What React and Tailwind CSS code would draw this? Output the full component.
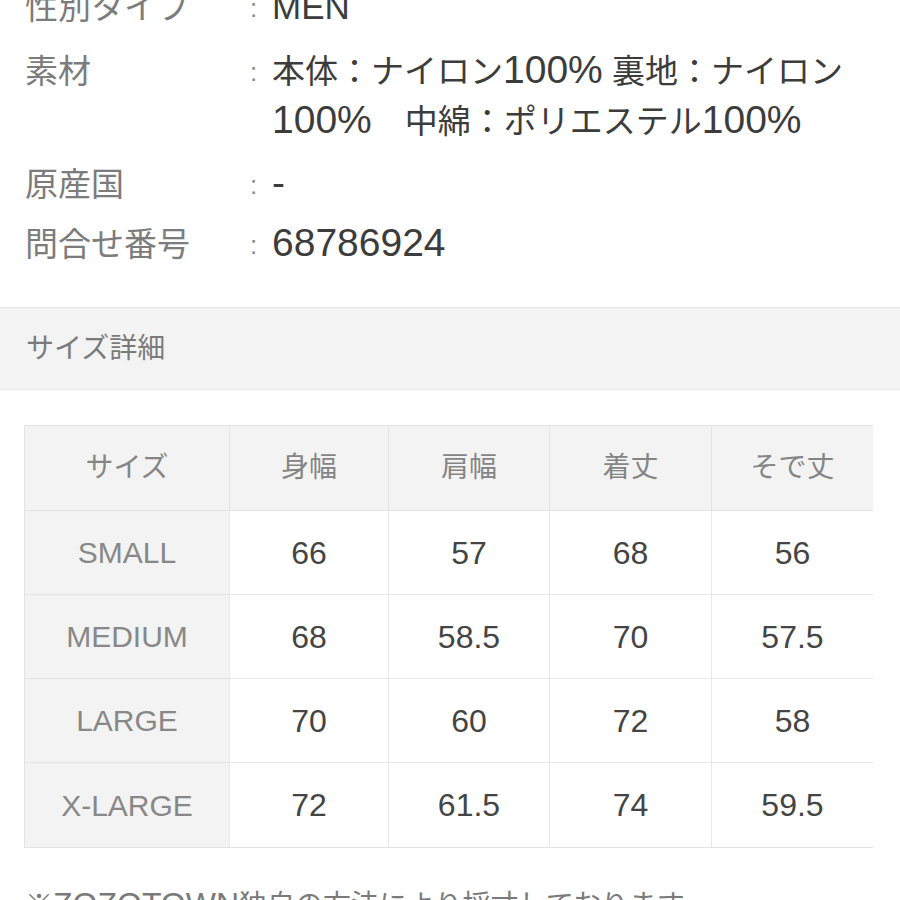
const sizes = [
  { name: "SMALL", v: ["66", "57", "68", "56"] },
  { name: "MEDIUM", v: ["68", "58.5", "70", "57.5"] },
  { name: "LARGE", v: ["70", "60", "72", "58"] },
  { name: "X-LARGE", v: ["72", "61.5", "74", "59.5"] },
];

const heads = ["身幅", "肩幅", "着丈", "そで丈"];

const L = ({ children, className = "" }) => (
  <span className={`text-[39px] leading-none ${className}`}>{children}</span>
);

const Row = ({ label, children, className = "" }) => (
  <div className={`flex leading-[50px] ${className}`}>
    <div className="w-[225px] shrink-0 text-[33px] text-[#7c7c7c]">{label}</div>
    <div className="w-[22px] shrink-0 text-[26px] text-[#8a8a8a]">:</div>
    <div className="flex-1 text-[33px] text-[#3c3c3c]">{children}</div>
  </div>
);

export default function App() {
  return (
    <div
      className="w-[900px] h-[900px] overflow-hidden bg-white"
      style={{ fontFamily: '"Liberation Sans", "Noto Sans CJK JP", sans-serif' }}
    >
      <div className="pl-[25px] pr-[20px] mt-[-17px]">
        <Row label="性別タイプ" className="h-[50px]">
          <span className="text-[35px] leading-none">MEN</span>
        </Row>
        <Row label="素材" className="mt-[14px] h-[100px]">
          本体：ナイロン<L>100%</L> 裏地：ナイロン
          <br />
          <L>100%</L>　中綿：ポリエステル<L>100%</L>
        </Row>
        <Row label="原産国" className="mt-[13px] h-[50px]">
          <L>-</L>
        </Row>
        <Row label="問合せ番号" className="mt-[10px] h-[50px]">
          <L>68786924</L>
        </Row>
      </div>

      <div className="mt-[37px] h-[83px] flex items-center px-[26px] bg-[#f3f3f3] border-y border-[#e8e8e8]">
        <span className="text-[28px] text-[#7a7a7a]">サイズ詳細</span>
      </div>

      <div className="mt-[35px] ml-[24px] w-[849px] grid grid-cols-[204px_159px_161px_162px_162px] border border-[#e3e3e3]">
        <div className="h-[85px] flex items-center justify-center bg-[#f3f3f3] text-[28px] text-[#858585] border-b border-[#e3e3e3]">
          サイズ
        </div>
        {heads.map((h) => (
          <div
            key={h}
            className="h-[85px] flex items-center justify-center bg-[#f3f3f3] text-[28px] text-[#858585] border-l border-b border-[#e3e3e3]"
          >
            {h}
          </div>
        ))}
        {sizes.map((s, i) => (
          <div key={s.name} className="contents">
            <div
              className={`h-[84px] flex items-center justify-center bg-[#f3f3f3] text-[30px] text-[#888] ${
                i < 3 ? "border-b border-[#e3e3e3]" : ""
              }`}
            >
              {s.name}
            </div>
            {s.v.map((v, j) => (
              <div
                key={j}
                className={`h-[84px] flex items-center justify-center bg-white text-[32px] text-[#444] border-l border-[#e8e8e8] ${
                  i < 3 ? "border-b" : ""
                }`}
              >
                {v}
              </div>
            ))}
          </div>
        ))}
      </div>

      <div className="mt-[38px] pl-[25px] text-[28px] leading-[40px] text-[#7a7a7a] whitespace-nowrap">
        ※<span className="text-[32px] leading-none">ZOZOTOWN</span>独自の方法により採寸しております。
      </div>
    </div>
  );
}
